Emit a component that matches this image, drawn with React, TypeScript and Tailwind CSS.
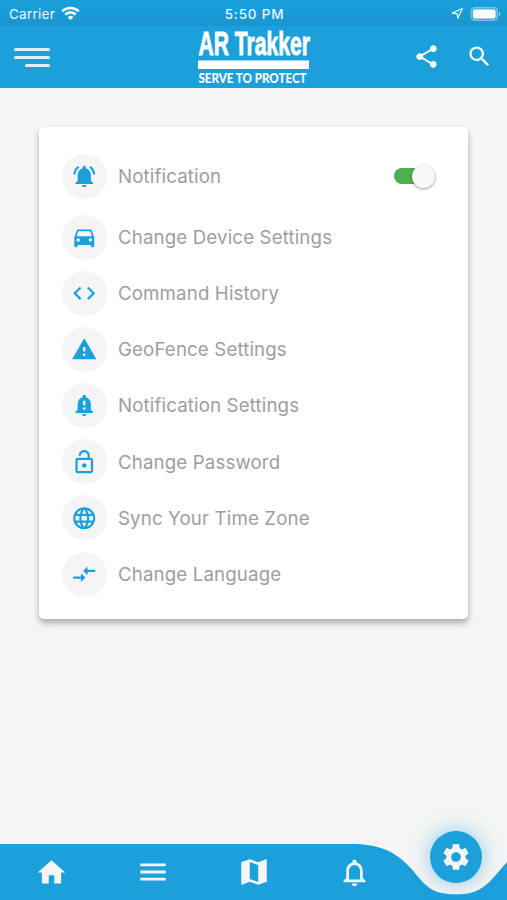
import type { ReactNode } from "react";
import type { IconType } from "react-icons";
import {
  MdCode,
  MdCompareArrows,
  MdDirectionsCar,
  MdHome,
  MdLanguage,
  MdLockOpen,
  MdMap,
  MdMenu,
  MdNotificationImportant,
  MdNotificationsActive,
  MdNotificationsNone,
  MdSearch,
  MdSettings,
  MdShare,
  MdWarning,
} from "react-icons/md";

function StatusBar() {
  return (
    <div className="flex h-[26px] items-center bg-gradient-to-b from-[#1ba0dc] to-[#1a95cf] pt-[1px] text-[13.5px] text-white/90">
      <div className="flex flex-1 items-center gap-[6px] pl-[9px]">
        <span className="pt-px tracking-[0.25px]">Carrier</span>
        <svg width="19" height="15" viewBox="0 0 19 15" fill="none" stroke="white" strokeWidth="2.4">
          <path d="M1.2 5.4a11.8 11.8 0 0 1 16.6 0M4.3 8.6a7.4 7.4 0 0 1 10.4 0" />
          <path d="M6.6 11.2a4.1 4.1 0 0 1 5.8 0L9.5 14z" fill="white" stroke="none" />
        </svg>
      </div>
      <span className="mr-px pt-px font-medium leading-4 tracking-[0.8px]">5:50 PM</span>
      <div className="flex flex-1 items-center justify-end gap-[6px] pr-[6px]">
        <svg width="13" height="13" viewBox="0 0 13 13" fill="none" stroke="white" strokeWidth="1.1" strokeLinejoin="round">
          <path d="M11.4 1.4 1.3 6.1l4.8.5.6 4.6z" />
        </svg>
        <svg width="31" height="14" viewBox="0 0 31 14">
          <rect x="1" y=".6" width="26.5" height="12.8" rx="4" fill="white" fillOpacity=".2" stroke="white" strokeOpacity=".4" />
          <rect x="3" y="2.5" width="22.5" height="9" rx="2" fill="white" />
          <path d="M29 5v4c1-.4 1.5-1.1 1.5-2S30 5.4 29 5z" fill="white" fillOpacity=".5" />
        </svg>
      </div>
    </div>
  );
}

function Logo() {
  return (
    <svg width="116" height="60" viewBox="0 0 116 60" fill="white" className="block overflow-visible">
      <text
        x="2.5"
        y="28.2"
        fontFamily="'Liberation Sans', Arial, sans-serif"
        fontWeight="700"
        fontSize="33.5"
        textLength="111.5"
        lengthAdjust="spacingAndGlyphs"
        stroke="white"
        strokeWidth=".9"
      >
        AR Trakker
      </text>
      <rect x="2" y="33.5" width="111" height="8.5" />
      <text
        x="2.5"
        y="56"
        fontFamily="Lato, 'Liberation Sans', sans-serif"
        fontWeight="900"
        fontSize="13"
        textLength="108"
        lengthAdjust="spacingAndGlyphs"
      >
        SERVE TO PROTECT
      </text>
    </svg>
  );
}

function Header() {
  return (
    <header className="flex h-[62px] items-center bg-[#1ca0dc] text-white">
      <div className="flex flex-1 pl-[14px]">
        <div className="flex w-9 flex-col items-end gap-[5px]">
          <span className="h-[3px] w-full rounded-full bg-white/85" />
          <span className="h-[3px] w-full rounded-full bg-white/85" />
          <span className="h-[3px] w-[25px] rounded-full bg-white/85" />
        </div>
      </div>
      <Logo />
      <div className="flex flex-1 items-center justify-end gap-[26px] pr-[14px] pb-[2px]">
        <MdShare size={27} />
        <MdSearch size={27} />
      </div>
    </header>
  );
}

function Row({ icon: Icon, label, children }: { icon: IconType; label: string; children?: ReactNode }) {
  return (
    <div className="flex items-center">
      <div className="flex size-[45px] shrink-0 items-center justify-center rounded-full bg-[#f5f5f5] text-[#1ca0dc]">
        <Icon size={26.5} />
      </div>
      <span className="ml-[11px] flex-1 pt-[1.5px] text-[18.7px] leading-6 tracking-[0.13px] text-[#9e9e9e]">{label}</span>
      {children}
    </div>
  );
}

function Toggle() {
  return (
    <div className="mr-[10px] flex h-4 w-[41px] items-center justify-end rounded-full bg-[#4caf50]">
      <div className="size-[23px] shrink-0 rounded-full bg-[#f7f7f7] shadow-[0_1px_3px_rgba(0,0,0,0.4)]" />
    </div>
  );
}

const settings: { icon: IconType; label: string }[] = [
  { icon: MdDirectionsCar, label: "Change Device Settings" },
  { icon: MdCode, label: "Command History" },
  { icon: MdWarning, label: "GeoFence Settings" },
  { icon: MdNotificationImportant, label: "Notification Settings" },
  { icon: MdLockOpen, label: "Change Password" },
  { icon: MdLanguage, label: "Sync Your Time Zone" },
  { icon: MdCompareArrows, label: "Change Language" },
];

function BottomNav() {
  return (
    <nav className="relative h-[56px] text-[#f5f5f5]">
      <svg className="absolute inset-0 block" width="507" height="56" viewBox="0 0 507 56" fill="#1ca0dc">
        <path d="M0 0H350C380 0 397 7 415 29C427 44 434 50.3 456 50.3C476 50.3 484 44 494 33L507 18V56H0Z" />
      </svg>
      <div className="relative grid h-full grid-cols-5 items-center justify-items-center">
        <MdHome size={33} className="ml-[2px]" />
        <MdMenu size={34} className="ml-[2px]" />
        <MdMap size={34} className="ml-[1px]" />
        <MdNotificationsNone size={33} />
        <div className="-mt-[30px] flex size-[52px] items-center justify-center rounded-full bg-[#1ca0dc] shadow-[0_0_20px_rgba(28,160,220,0.5)]">
          <MdSettings size={32} />
        </div>
      </div>
    </nav>
  );
}

export default function App() {
  return (
    <div className="flex h-[900px] w-[507px] flex-col overflow-hidden bg-[#f5f5f5] font-['Inter','Liberation_Sans',sans-serif]">
      <StatusBar />
      <Header />
      <main className="flex-1 px-[39px] pt-[39px]">
        <section className="h-[492px] rounded-[5px] bg-white px-[23px] pt-[26.5px] shadow-[0_4px_6px_rgba(0,0,0,0.3)]">
          <Row icon={MdNotificationsActive} label="Notification">
            <Toggle />
          </Row>
          <div className="mt-4 flex flex-col gap-[11.2px]">
            {settings.map((item) => (
              <Row key={item.label} {...item} />
            ))}
          </div>
        </section>
      </main>
      <BottomNav />
    </div>
  );
}
